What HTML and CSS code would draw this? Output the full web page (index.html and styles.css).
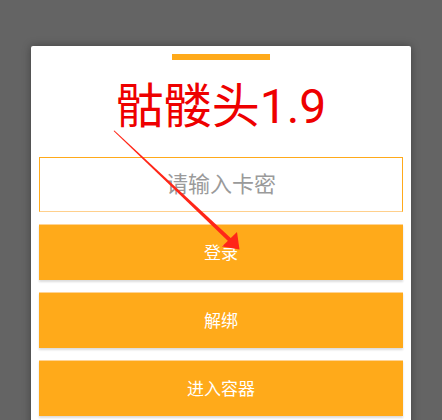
FILE: index.html
```html
<!DOCTYPE html>
<html lang="zh">
<head>
<meta charset="utf-8">
<title>骷髅头1.9</title>
<link rel="stylesheet" href="styles.css">
</head>
<body>
<div class="card">
  <div class="bar"></div>
  <h1 class="title">骷髅头1.9</h1>
  <div class="input">请输入卡密</div>
  <div class="btn">登录</div>
  <div class="btn">解绑</div>
  <div class="btn">进入容器</div>
</div>
<svg class="arrow" width="442" height="420" viewBox="0 0 442 420">
  <polygon points="113.6,131 114.4,130.6 233.4,240.4 230.6,243.6" fill="#ff2618"/>
  <polygon points="239.5,249.5 237,232 222,246.5" fill="#ff2618"/>
</svg>
</body>
</html>
```
FILE: styles.css
```css
html, body {
  margin: 0;
  padding: 0;
}
body {
  background: #646464;
  width: 442px;
  height: 420px;
  overflow: hidden;
  position: relative;
  font-family: Roboto, "Noto Sans CJK SC", sans-serif;
}
.card {
  margin: 46px 0 0 31px;
  width: 364px;
  padding: 8px 8px 20px;
  background: #fff;
  border-radius: 2px;
  box-shadow: 0 0 8px rgba(0, 0, 0, 0.35);
  display: flex;
  flex-direction: column;
  align-items: stretch;
}
.bar {
  align-self: center;
  width: 98px;
  height: 6px;
  background: #ffaa1a;
}
.title {
  margin: 0;
  height: 97px;
  line-height: 94px;
  text-align: center;
  font-size: 48px;
  font-weight: normal;
  color: #ee0000;
}
.input {
  box-sizing: border-box;
  height: 55px;
  padding-bottom: 5px;
  border: 1px solid #ffaa1a;
  border-bottom-color: #ffd08c;
  display: flex;
  align-items: center;
  justify-content: center;
  font-size: 22px;
  color: #9a9a9a;
}
.btn {
  margin-top: 12px;
  height: 56px;
  padding-bottom: 3px;
  background: #ffaa1a;
  border-top: 1px solid #ffd494;
  box-sizing: border-box;
  box-shadow: 0 2px 2px rgba(0, 0, 0, 0.14);
  display: flex;
  align-items: center;
  justify-content: center;
  font-size: 17px;
  color: #fff;
}
.arrow {
  position: absolute;
  left: 0;
  top: 0;
  pointer-events: none;
}
```
